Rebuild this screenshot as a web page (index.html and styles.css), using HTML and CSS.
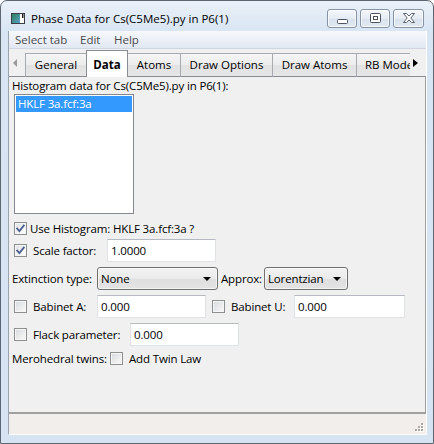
FILE: index.html
```html
<!DOCTYPE html>
<html>
<head>
<meta charset="utf-8">
<title>Phase Data</title>
<link rel="stylesheet" href="styles.css">
</head>
<body>
<div class="window">
  <div class="titlebar">
    <svg class="appicon" width="14" height="11" viewBox="0 0 14 11">
      <defs>
        <linearGradient id="ig" x1="0" y1="0" x2="1" y2="1">
          <stop offset="0" stop-color="#2f7f62"/>
          <stop offset="1" stop-color="#5d9fc4"/>
        </linearGradient>
      </defs>
      <rect x="0.5" y="0.5" width="13" height="10" fill="#fff" stroke="#3a3f46"/>
      <rect x="1" y="1" width="8" height="9" fill="url(#ig)"/>
      <rect x="11" y="1" width="1.5" height="4" fill="#222"/>
    </svg>
    <span class="title">Phase Data for Cs(C5Me5).py in P6(1)</span>
    <div class="wbtns">
      <div class="wbtn wbtn-min">
        <svg width="11" height="5" viewBox="0 0 11 5"><rect x="0.5" y="0.5" width="10" height="4" rx="1" fill="#fff" stroke="#4c5360"/></svg>
      </div>
      <div class="wbtn">
        <svg width="11" height="10" viewBox="0 0 11 10"><rect x="0.5" y="0.5" width="10" height="9" rx="1" fill="#fff" stroke="#4c5360"/><rect x="3.5" y="3.5" width="4" height="3" fill="none" stroke="#4c5360"/></svg>
      </div>
      <div class="wbtn wbtn-close">
        <svg width="12" height="10" viewBox="0 0 12 10"><polygon points="0.5,0.5 3.5,0.5 6,3 8.5,0.5 11.5,0.5 7.8,5 11.5,9.5 8.5,9.5 6,7 3.5,9.5 0.5,9.5 4.2,5" fill="#fff" stroke="#5a6170" stroke-linejoin="round"/></svg>
      </div>
    </div>
  </div>
  <div class="client">
    <div class="menubar">
      <span class="menu menu-select">Select tab</span>
      <span class="menu menu-edit">Edit</span>
      <span class="menu">Help</span>
    </div>
    <div class="tabstrip">
      <div class="tabnav"><span class="tri-left"></span></div>
      <div class="tabs">
        <div class="tab tab-general">General</div>
        <div class="tab tab-data active">Data</div>
        <div class="tab tab-atoms">Atoms</div>
        <div class="tab tab-drawopt">Draw Options</div>
        <div class="tab tab-drawatoms">Draw Atoms</div>
        <div class="tab tab-rb">RB Models</div>
      </div>
      <div class="tabnav tabnav-right"><span class="tri-right"></span></div>
    </div>
    <div class="panel">
      <div class="caption">Histogram data for Cs(C5Me5).py in P6(1):</div>
      <div class="listbox">
        <div class="item selected">HKLF 3a.fcf:3a</div>
      </div>

      <div class="row row-cb row-usehist">
        <span class="cb checked"><svg width="11" height="11" viewBox="0 0 11 11"><path d="M2.2 5.6 L4.4 8 L8.8 2.6" fill="none" stroke="#4b5e8f" stroke-width="1.8" stroke-linecap="square"/></svg></span>
        <span class="cbtext-tight">Use Histogram: HKLF 3a.fcf:3a ?</span>
      </div>

      <div class="row row-field row-scale">
        <span class="cb checked"><svg width="11" height="11" viewBox="0 0 11 11"><path d="M2.2 5.6 L4.4 8 L8.8 2.6" fill="none" stroke="#4b5e8f" stroke-width="1.8" stroke-linecap="square"/></svg></span>
        <span class="cbtext lbl-scale">Scale factor:</span>
        <span class="input w109">1.0000</span>
      </div>

      <div class="row row-field row-ext">
        <span class="lbl lbl-ext">Extinction type:</span>
        <span class="combo w121">None<span class="drop"></span></span>
        <span class="lbl lbl-approx">Approx:</span>
        <span class="combo w84">Lorentzian<span class="drop"></span></span>
      </div>

      <div class="row row-field">
        <span class="cb"></span>
        <span class="cbtext lbl-babA">Babinet A:</span>
        <span class="input w109">0.000</span>
        <span class="cb cb-babU"></span>
        <span class="cbtext lbl-babU">Babinet U:</span>
        <span class="input w111">0.000</span>
      </div>

      <div class="row row-field">
        <span class="cb"></span>
        <span class="cbtext lbl-flack">Flack parameter:</span>
        <span class="input w109">0.000</span>
      </div>

      <div class="row row-cb row-mero">
        <span class="lbl lbl-mero">Merohedral twins:</span>
        <span class="cb cb-mero"></span>
        <span class="cbtext">Add Twin Law</span>
      </div>
    </div>
    <div class="statusbar">
      <svg class="grip" width="10" height="10" viewBox="0 0 10 10">
        <g fill="#fff">
          <rect x="8" y="1" width="2" height="2"/>
          <rect x="5" y="4" width="2" height="2"/><rect x="8" y="4" width="2" height="2"/>
          <rect x="2" y="7" width="2" height="2"/><rect x="5" y="7" width="2" height="2"/><rect x="8" y="7" width="2" height="2"/>
        </g>
        <g fill="#aaa6a0">
          <rect x="7" y="0" width="2" height="2"/>
          <rect x="4" y="3" width="2" height="2"/><rect x="7" y="3" width="2" height="2"/>
          <rect x="1" y="6" width="2" height="2"/><rect x="4" y="6" width="2" height="2"/><rect x="7" y="6" width="2" height="2"/>
        </g>
      </svg>
    </div>
  </div>
</div>
</body>
</html>
```

FILE: styles.css
```css
* { box-sizing: border-box; }
html, body { margin: 0; padding: 0; background: #ffffff; }
body {
  width: 434px;
  height: 444px;
  overflow: hidden;
  font-family: "Open Sans", "Noto Sans", "DejaVu Sans", sans-serif;
  font-size: 11.5px;
  color: #000;
}

.window {
  width: 434px;
  height: 444px;
  border: 1px solid #5e6672;
  border-radius: 7px 7px 0 0;
  background: linear-gradient(#eaf1f9 0px, #d8e5f3 30px, #d6e3f2 100%);
  display: flex;
  flex-direction: column;
  padding-bottom: 8px;
}

/* title bar */
.titlebar {
  height: 30px;
  flex: none;
  display: flex;
  align-items: center;
  padding: 4px 9px 0 10px;
}
.appicon { flex: none; }
.title {
  margin-left: 6px;
  flex: 1;
  white-space: nowrap;
  font-size: 11.5px;
  color: #000;
}
.wbtns { display: flex; gap: 3px; }
.wbtn {
  width: 30px;
  height: 19px;
  border: 1px solid #8593a5;
  border-radius: 3px;
  background: linear-gradient(#f5f8fb, #e4ebf3 50%, #d9e2ec 51%, #e1e8f0);
  box-shadow: inset 0 0 0 1px rgba(255,255,255,0.7);
  display: flex;
  align-items: center;
  justify-content: center;
}
.wbtn-min { align-items: flex-end; padding-bottom: 3px; }
.wbtn-close { width: 31px; }

/* client area */
.client {
  flex: 1;
  margin: 0 6px 0 7px;
  display: flex;
  flex-direction: column;
  background: #f0f0f0;
  border-left: 1px solid #9ba3ae;
  border-right: 1px solid #ffffff;
  border-bottom: 1px solid #ffffff;
}
.menubar {
  height: 18px;
  flex: none;
  display: flex;
  align-items: center;
  padding-left: 6px;
  background: linear-gradient(#f6f8fc, #e2e8f3);
  border-bottom: 1px solid #cfd6e2;
  color: #4a4a4a;
  font-size: 11.5px;
}
.menu { white-space: nowrap; }
.menu-select { width: 65px; }
.menu-edit { width: 34px; }

/* notebook */
.tabstrip {
  height: 27px;
  flex: none;
  display: flex;
  align-items: flex-end;
}
.tabnav {
  width: 16px;
  height: 27px;
  flex: none;
  padding: 10px 0 0 4px;
}
.tabnav-right { width: 16px; padding-left: 3px; }
.tri-left {
  display: block;
  width: 0; height: 0;
  border-top: 4px solid transparent;
  border-bottom: 4px solid transparent;
  border-right: 4px solid #9a9a9a;
}
.tri-right {
  display: block;
  width: 0; height: 0;
  border-top: 4px solid transparent;
  border-bottom: 4px solid transparent;
  border-left: 5px solid #000;
}
.tabs {
  width: 385px;
  height: 28px;
  flex: none;
  margin-bottom: -1px;
  display: flex;
  align-items: flex-end;
  overflow: hidden;
  position: relative;
  z-index: 1;
}
.tab {
  flex: none;
  height: 24px;
  border: 1px solid #a7aab0;
  border-bottom-color: #898c95;
  border-right-width: 0;
  background: linear-gradient(#f5f5f5, #ececec 50%, #e2e2e2 51%, #e6e6e6);
  display: flex;
  align-items: center;
  justify-content: center;
  white-space: nowrap;
  padding-bottom: 1px;
  font-size: 11.5px;
}
.tab.active {
  height: 27px;
  background: #ffffff;
  border-color: #898c95;
  border-bottom: none;
  border-right-width: 1px;
  font-weight: bold;
  padding-bottom: 0;
  padding-top: 1px;
}
.tab-general { width: 61px; }
.tab-data { width: 42px; }
.tab-atoms { width: 52px; border-left: none; }
.tab-drawopt { width: 92px; }
.tab-drawatoms { width: 84px; }
.tab-rb { width: 60px; justify-content: flex-start; padding-left: 8px; overflow: hidden; }

.panel {
  height: 338px;
  flex: none;
  background: #f0f0f0;
  border-top: 1px solid #898c95;
  border-right: 1px solid #a0a0a0;
  border-bottom: 2px solid #a0a0a0;
  padding-left: 3px;
  letter-spacing: -0.15px;
}
.caption {
  margin-top: 1px;
  line-height: 15px;
  height: 15px;
  white-space: nowrap;
}
.listbox {
  margin: 1px 0 0 2px;
  width: 120px;
  height: 120px;
  background: #fff;
  border: 1px solid #828790;
  padding: 1px;
}
.item {
  height: 16px;
  line-height: 16px;
  padding-left: 2px;
  white-space: nowrap;
}
.item.selected { background: #3399ff; color: #fff; }

.row {
  display: flex;
  align-items: center;
  white-space: nowrap;
}
.row-cb { height: 17px; margin-top: 5px; }
.row-usehist { margin-top: 6px; }
.row-field { height: 23px; margin-top: 5px; }
.row-scale { margin-top: 2px; }
.row-mero { margin-top: 4px; }

.cb {
  flex: none;
  width: 13px;
  height: 13px;
  margin-left: 2px;
  border: 1px solid #8e8f8f;
  background: linear-gradient(135deg, #d6d8dc, #f4f4f4 80%);
  box-shadow: inset 0 0 0 1px #f6f6f6;
  display: flex;
  align-items: center;
  justify-content: center;
}
.cb.checked { background: linear-gradient(135deg, #dfe1e6, #fafafa 80%); }
.cbtext-tight { margin-left: 3px; }
.cbtext { margin-left: 6px; }
.lbl { flex: none; }

.lbl-scale { width: 74px; }
.lbl-babA { width: 64px; }
.lbl-babU { width: 63px; }
.lbl-flack { width: 97px; }
.lbl-ext { width: 85px; }
.lbl-approx { width: 43px; margin-left: 3px; }
.lbl-mero { width: 98px; }
.cb-babU { margin-left: 6px; }
.cb-mero { margin-left: 0; }

.input {
  flex: none;
  height: 23px;
  line-height: 21px;
  background: #fff;
  border: 1px solid #dfe2e7;
  border-top-color: #b5b9c1;
  padding-left: 3px;
}
.w109 { width: 109px; }
.w111 { width: 111px; }

.combo {
  flex: none;
  height: 23px;
  border: 1px solid #707070;
  border-radius: 3px;
  background: linear-gradient(#f3f3f3, #eaeaea 50%, #dedede 51%, #e4e4e4);
  box-shadow: inset 0 0 0 1px rgba(255,255,255,0.6);
  display: flex;
  align-items: center;
  justify-content: space-between;
  padding: 0 6px 0 3px;
}
.w121 { width: 121px; }
.w84 { width: 84px; }
.drop {
  display: block;
  width: 0; height: 0;
  border-left: 4px solid transparent;
  border-right: 4px solid transparent;
  border-top: 4px solid #000;
}

.statusbar {
  height: 20px;
  flex: none;
  background: #f1eeec;
  display: flex;
  justify-content: flex-end;
  align-items: flex-end;
  padding: 0 2px 1px 0;
}
.grip { display: block; }
```
